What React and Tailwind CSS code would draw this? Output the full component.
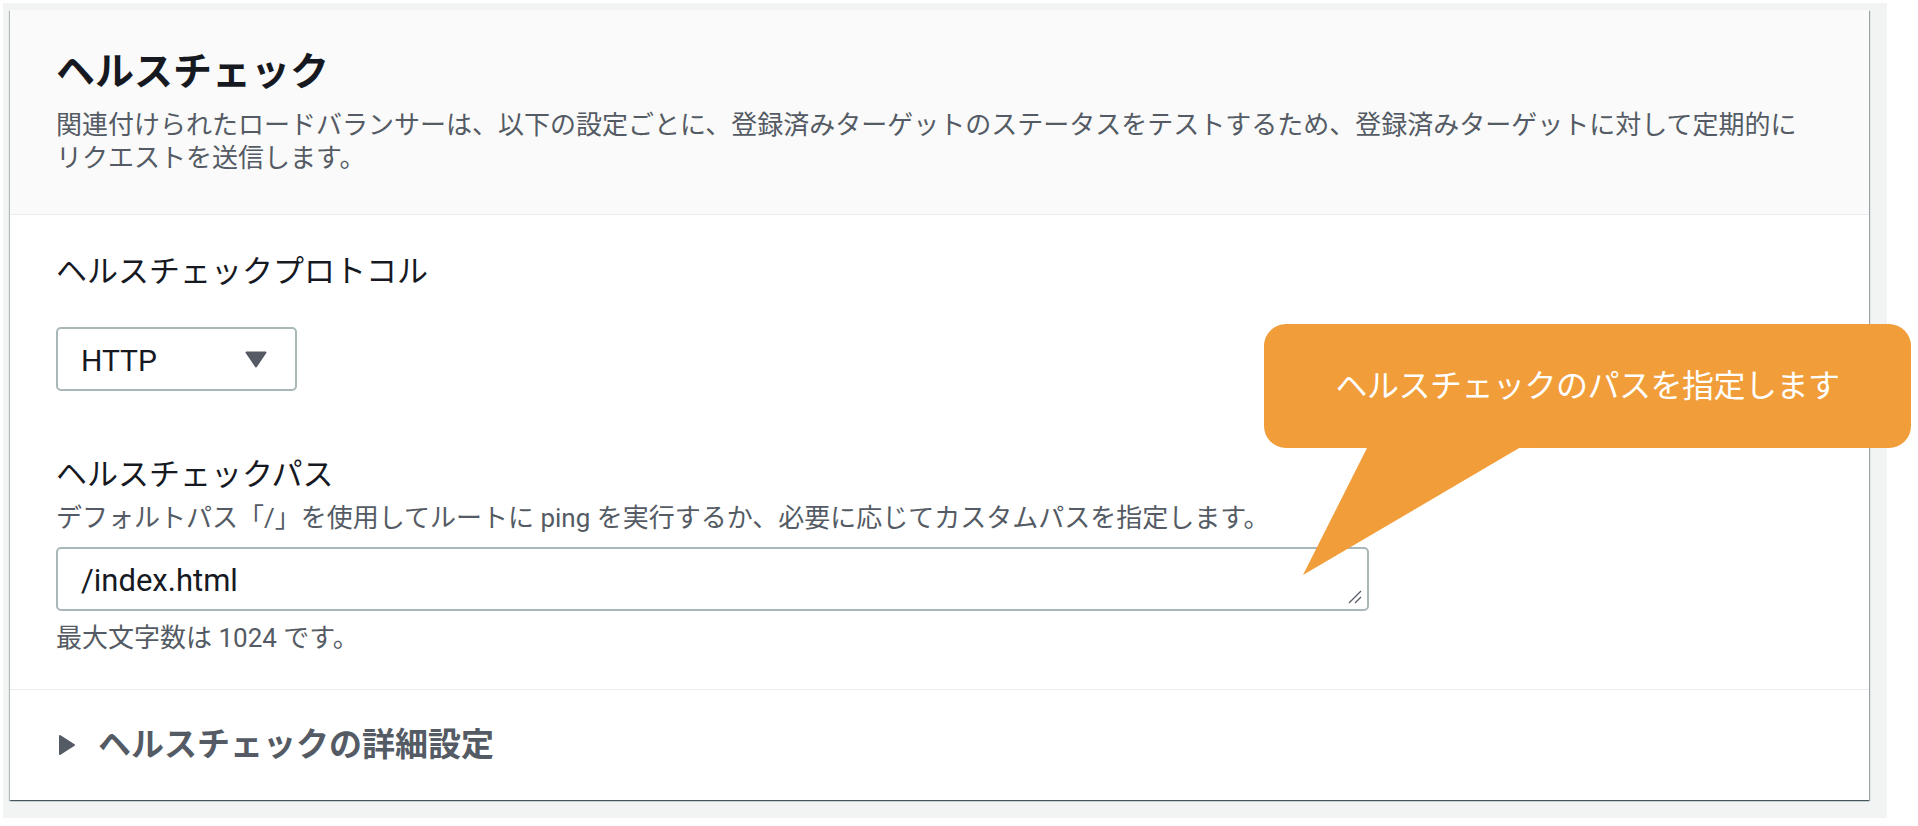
export default function App() {
  const font = { fontFamily: 'Roboto, "Noto Sans CJK JP", sans-serif' };

  return (
    <div className="min-h-screen bg-white pl-[3px] pt-[3px]" style={font}>
      <div className="relative w-[1884px] h-[815px] bg-[#f2f3f3] pl-[7px] pt-[7px]">
        {/* card */}
        <div className="w-[1859px] bg-white shadow-[0_1px_1px_0_rgba(0,28,36,0.5),1px_1px_1px_0_rgba(0,28,36,0.3),-1px_1px_1px_0_rgba(0,28,36,0.2)]">
          <div className="bg-[#fafafa] border-b border-[#eaeded] px-[46px] pt-[38px] pb-[39px]">
            <h2 className="text-[39px] font-bold leading-[49px] text-[#16191f]">ヘルスチェック</h2>
            <p className="mt-[12px] text-[26px] leading-[33px] text-[#545b64]">
              関連付けられたロードバランサーは、以下の設定ごとに、登録済みターゲットのステータスをテストするため、登録済みターゲットに対して定期的に
              <br />
              リクエストを送信します。
            </p>
          </div>

          <div className="px-[46px] pt-[37px] pb-[34px] border-b border-[#eaeded]">
            <div className="text-[31px] leading-[40px] text-[#16191f]">ヘルスチェックプロトコル</div>
            <div className="mt-[35px] w-[241px] h-[64px] border-2 border-[#aab7b8] rounded-[5px] flex items-center justify-between pl-[23px] pr-[28px]">
              <span className="text-[30px] text-[#16191f] pt-[2px]">HTTP</span>
              <svg width="22" height="17" viewBox="0 0 22 17">
                <polygon points="1.5,1.5 20.5,1.5 11,15.5" fill="#545b64" stroke="#545b64" strokeWidth="2" strokeLinejoin="round" />
              </svg>
            </div>

            <div className="mt-[64px] text-[31px] leading-[40px] text-[#16191f]">ヘルスチェックパス</div>
            <div className="mt-[7px] text-[26px] leading-[33px] text-[#545b64]">
              デフォルトパス「/」を使用してルートに ping を実行するか、必要に応じてカスタムパスを指定します。
            </div>
            <div className="relative mt-[12px] w-[1313px] h-[64px] border-2 border-[#aab7b8] rounded-[5px] flex items-center pl-[23px]">
              <span className="text-[31px] text-[#16191f] pt-[4px]">/index.html</span>
              <svg className="absolute right-[5px] bottom-[5px]" width="14" height="14" viewBox="0 0 14 14">
                <line x1="13" y1="1" x2="1" y2="13" stroke="#545b64" strokeWidth="1.3" />
                <line x1="13" y1="7" x2="7" y2="13" stroke="#545b64" strokeWidth="1.3" />
              </svg>
            </div>
            <div className="mt-[11px] text-[26px] leading-[33px] text-[#545b64]">最大文字数は 1024 です。</div>
          </div>

          <div className="h-[110px] flex items-center pl-[48px] gap-[22px]">
            <svg width="18" height="22" viewBox="0 0 18 22">
              <polygon points="2,2 16,11 2,20" fill="#545b64" stroke="#545b64" strokeWidth="2" strokeLinejoin="round" />
            </svg>
            <span className="text-[33px] font-bold text-[#545b64]">ヘルスチェックの詳細設定</span>
          </div>
        </div>

        {/* callout */}
        <div className="absolute left-[1261px] top-[321px] w-[647px] h-[124px] rounded-[22px] bg-[#f19d39] flex items-center justify-center">
          <span className="text-[32px] text-white tracking-[-0.5px]">ヘルスチェックのパスを指定します</span>
        </div>
        <svg className="absolute left-[1294px] top-[437px]" width="240" height="140" viewBox="0 0 240 140">
          <polygon points="74,0 236,0 6,135" fill="#f19d39" />
        </svg>
      </div>
    </div>
  );
}
